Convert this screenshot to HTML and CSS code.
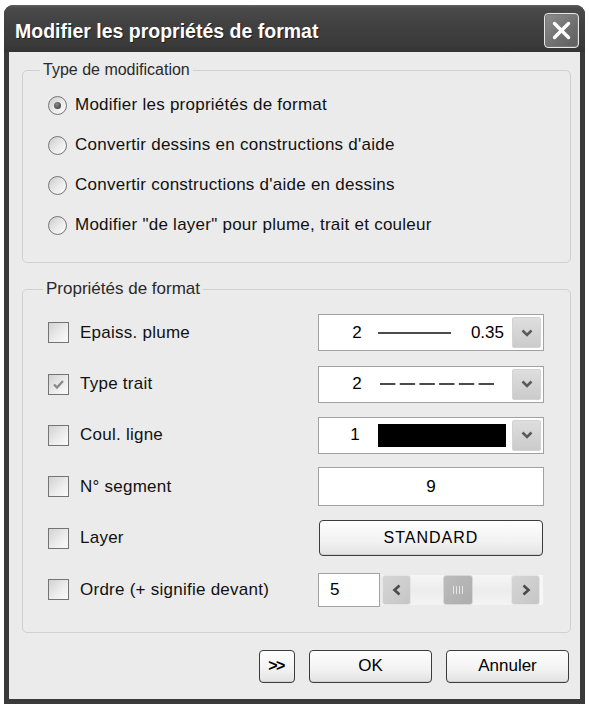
FILE: index.html
```html
<!DOCTYPE html>
<html lang="fr">
<head>
<meta charset="utf-8">
<title>Modifier les propriétés de format</title>
<link rel="stylesheet" href="styles.css">
</head>
<body>
<div class="window">
  <div class="titlebar">
    <span class="title">Modifier les propriétés de format</span>
    <button class="close" aria-label="Fermer">
      <svg viewBox="0 0 33 33" width="33" height="33"><path d="M9.5 9.5 L23.5 23.5 M23.5 9.5 L9.5 23.5" stroke="#fff" stroke-width="3.4" stroke-linecap="round" fill="none"/></svg>
    </button>
  </div>
  <div class="client">
    <fieldset class="group group-type">
      <legend>Type de modification</legend>
      <div class="radios">
        <label class="opt"><span class="radio checked"></span>Modifier les propriétés de format</label>
        <label class="opt"><span class="radio"></span>Convertir dessins en constructions d'aide</label>
        <label class="opt"><span class="radio"></span>Convertir constructions d'aide en dessins</label>
        <label class="opt"><span class="radio"></span>Modifier "de layer" pour plume, trait et couleur</label>
      </div>
    </fieldset>

    <fieldset class="group group-props">
      <legend>Propriétés de format</legend>
      <div class="props">
        <label class="opt chk"><span class="check"></span>Epaiss. plume</label>
        <div class="combo">
          <div class="cv">
            <span class="num">2</span>
            <svg class="solid" width="73" height="4" viewBox="0 0 73 4"><line x1="0" y1="2" x2="73" y2="2" stroke="#111" stroke-width="1.4"/></svg>
            <span class="val">0.35</span>
          </div>
          <span class="drop"><svg width="14" height="10" viewBox="0 0 14 10"><path d="M2.5 2.5 L7 7 L11.5 2.5" stroke="#5a5a5a" stroke-width="2.6" fill="none"/></svg></span>
        </div>

        <label class="opt chk"><span class="check on"><svg width="15" height="15" viewBox="0 0 15 15"><path d="M3 7.5 L6 10.5 L12 4" stroke="#8a8a8a" stroke-width="2.4" fill="none"/></svg></span>Type trait</label>
        <div class="combo">
          <div class="cv">
            <span class="num">2</span>
            <svg class="dashed" width="114" height="4" viewBox="0 0 114 4"><line x1="0" y1="2" x2="114" y2="2" stroke="#111" stroke-width="1.4" stroke-dasharray="15.4 4.32"/></svg>
          </div>
          <span class="drop"><svg width="14" height="10" viewBox="0 0 14 10"><path d="M2.5 2.5 L7 7 L11.5 2.5" stroke="#5a5a5a" stroke-width="2.6" fill="none"/></svg></span>
        </div>

        <label class="opt chk"><span class="check"></span>Coul. ligne</label>
        <div class="combo">
          <div class="cv">
            <span class="num num1">1</span>
            <span class="swatch"></span>
          </div>
          <span class="drop"><svg width="14" height="10" viewBox="0 0 14 10"><path d="M2.5 2.5 L7 7 L11.5 2.5" stroke="#5a5a5a" stroke-width="2.6" fill="none"/></svg></span>
        </div>

        <label class="opt chk"><span class="check"></span>N° segment</label>
        <div class="edit center">9</div>

        <label class="opt chk"><span class="check"></span>Layer</label>
        <button class="btn wide">STANDARD</button>

        <label class="opt chk"><span class="check"></span>Ordre (+ signifie devant)</label>
        <div class="spin">
          <div class="edit small">5</div>
          <div class="scroll">
            <span class="sbtn"><svg width="12" height="14" viewBox="0 0 12 14"><path d="M8.5 2.5 L3.5 7 L8.5 11.5" stroke="#4a4a4a" stroke-width="2.6" fill="none"/></svg></span>
            <div class="track">
              <span class="thumb"><svg width="14" height="10" viewBox="0 0 14 10"><path d="M2.5 1 V9 M5.5 1 V9 M8.5 1 V9 M11.5 1 V9" stroke="#e6e6e6" stroke-width="1"/></svg></span>
            </div>
            <span class="sbtn"><svg width="12" height="14" viewBox="0 0 12 14"><path d="M3.5 2.5 L8.5 7 L3.5 11.5" stroke="#4a4a4a" stroke-width="2.6" fill="none"/></svg></span>
          </div>
        </div>
      </div>
    </fieldset>

    <div class="buttons">
      <button class="btn more">&gt;&gt;</button>
      <button class="btn action">OK</button>
      <button class="btn action">Annuler</button>
    </div>
  </div>
</div>
</body>
</html>
```

FILE: styles.css
```css
html, body {
  margin: 0;
  padding: 0;
  background: #ffffff;
}

body {
  padding: 5px 0 0 4px;
  font-family: "Liberation Sans", Arial, sans-serif;
  font-size: 16px;
  color: #000;
}

.window {
  width: 581px;
  height: 699px;
  background: #3a3a3a;
  border-radius: 9px 9px 0 0;
  display: flex;
  flex-direction: column;
  box-sizing: border-box;
}

.titlebar {
  height: 47px;
  flex: none;
  display: flex;
  align-items: flex-start;
  justify-content: space-between;
  box-sizing: border-box;
  padding: 8px 6px 4px 11px;
  border-radius: 9px 9px 0 0;
  background: linear-gradient(#5e5e5e 0, #4a4a4a 3px, #414141 40%, #3a3a3a 85%, #333 100%);
}

.title {
  font-family: "Liberation Sans", Arial, sans-serif;
  font-weight: bold;
  font-size: 19.5px;
  line-height: 35px;
  padding-top: 1px;
  color: #fff;
  text-shadow: 1px 1px 0 #1e1e1e;
}

.close {
  width: 35px;
  height: 35px;
  padding: 0;
  margin: 0;
  border: 1px solid #e8e8e8;
  border-radius: 4px;
  background: linear-gradient(135deg, #8f8f8f, #6e6e6e 60%, #5e5e5e);
  box-shadow: inset 0 0 0 1px #777;
  display: flex;
  align-items: center;
  justify-content: center;
}

.close svg {
  display: block;
}

.client {
  flex: 1;
  margin: 0 5px 5px 5px;
  background: #ebebeb;
  padding: 0 9px 0 13px;
  display: flex;
  flex-direction: column;
}

.group {
  margin: 0;
  padding: 0;
  border: 1px solid #d0d0d0;
  border-radius: 5px;
  min-inline-size: 0;
  width: 549px;
  box-sizing: border-box;
}

.group legend {
  margin-left: 17px;
  padding: 0 3px;
  font-size: 16px;
  line-height: 18px;
  color: #2a2a2a;
}

.group-props legend {
  margin-left: 20px;
  font-size: 17px;
}

.group-type {
  margin-top: 9px;
}

.radios {
  padding: 6px 25px 17px 25px;
  display: flex;
  flex-direction: column;
}

.opt {
  display: flex;
  align-items: center;
  height: 40px;
  white-space: nowrap;
  font-size: 17px;
  letter-spacing: 0.25px;
  color: #111;
}

.radio {
  width: 19px;
  height: 19px;
  box-sizing: border-box;
  border: 1px solid #747474;
  border-radius: 50%;
  background: linear-gradient(135deg, #cbcbcb 0%, #ebebeb 55%, #fdfdfd 100%);
  margin-right: 8px;
  display: flex;
  align-items: center;
  justify-content: center;
  flex: none;
}

.radio.checked::after {
  content: "";
  width: 7px;
  height: 7px;
  border-radius: 50%;
  background: radial-gradient(circle at 40% 35%, #8a8a8a, #444 80%);
}

.group-props {
  margin-top: 17px;
}

.props {
  padding: 9px 26px 16.5px 25px;
  display: grid;
  grid-template-columns: 1fr 226px;
  grid-auto-rows: 51.4px;
  align-items: center;
}

.opt.chk {
  height: auto;
}

.check {
  width: 21px;
  height: 21px;
  box-sizing: border-box;
  border: 1px solid #747474;
  background: linear-gradient(135deg, #d2d2d2 0%, #eeeeee 60%, #fbfbfb 100%);
  margin-right: 11px;
  flex: none;
  display: flex;
  align-items: center;
  justify-content: center;
}

.check svg {
  display: block;
}

.combo {
  height: 37px;
  box-sizing: border-box;
  border: 1px solid #a2a2a2;
  background: #fff;
  display: flex;
  align-items: stretch;
  padding: 2px 2px 2px 0;
}

.cv {
  flex: 1;
  display: flex;
  align-items: center;
  padding-left: 33px;
  font-size: 17px;
}

.cv svg {
  display: block;
}

.num {
  width: 10px;
  text-align: center;
}

.solid {
  margin-left: 16px;
}

.val {
  margin-left: auto;
  margin-right: 8px;
}

.dashed {
  margin-left: 18px;
}

.num1 {
  margin-left: -2px;
}

.swatch {
  margin-left: 18px;
  width: 128px;
  height: 23px;
  background: #000;
}

.drop {
  width: 29px;
  box-sizing: border-box;
  border: 1px solid #d3d3d3;
  border-radius: 2px;
  background: linear-gradient(#dedede, #cbcbcb);
  display: flex;
  align-items: center;
  justify-content: center;
}

.edit {
  box-sizing: border-box;
  border: 1px solid #a2a2a2;
  background: #fff;
  height: 39px;
  display: flex;
  align-items: center;
  font-size: 17px;
}

.edit.center {
  justify-content: center;
}

.btn {
  font-family: "Liberation Sans", Arial, sans-serif;
  font-size: 17px;
  color: #000;
  box-sizing: border-box;
  border: 1px solid #3c3c3c;
  border-radius: 4px;
  background: linear-gradient(#fefefe, #f2f2f2 60%, #e2e2e2);
  box-shadow: inset 0 -1px 0 #d0d0d0;
  padding: 0;
  margin: 0;
}

.btn.wide {
  width: 224px;
  height: 36px;
  justify-self: center;
  font-size: 16px;
  letter-spacing: 1px;
}

.spin {
  display: flex;
  align-items: center;
  height: 34px;
}

.edit.small {
  width: 62px;
  height: 34px;
  padding-left: 11px;
  flex: none;
}

.scroll {
  flex: 1;
  display: flex;
  align-items: stretch;
  height: 30px;
  margin-left: 2px;
  margin-right: 1px;
  background: linear-gradient(#f6f6f6, #ececec 50%, #f4f4f4);
  border-right: 3px solid #f7f7f7;
}

.sbtn {
  width: 29px;
  flex: none;
  box-sizing: border-box;
  border: 1px solid #e6e6e6;
  border-radius: 3px;
  background: linear-gradient(135deg, #d6d6d6, #c6c6c6);
  display: flex;
  align-items: center;
  justify-content: center;
}

.track {
  flex: 1;
  display: flex;
  align-items: stretch;
  padding-left: 32px;
}

.thumb {
  width: 30px;
  box-sizing: border-box;
  border: 1px solid #d8d8d8;
  border-radius: 3px;
  background: linear-gradient(135deg, #bcbcbc, #adadad);
  display: flex;
  align-items: center;
  justify-content: center;
}

.buttons {
  margin-top: 17px;
  display: flex;
  justify-content: flex-end;
  gap: 14px;
  padding-right: 2px;
}

.btn.more {
  width: 36px;
  height: 33px;
  font-size: 16px;
  font-weight: bold;
  letter-spacing: -1.5px;
  padding-right: 2px;
}

.btn.action {
  width: 123px;
  height: 33px;
}
```
